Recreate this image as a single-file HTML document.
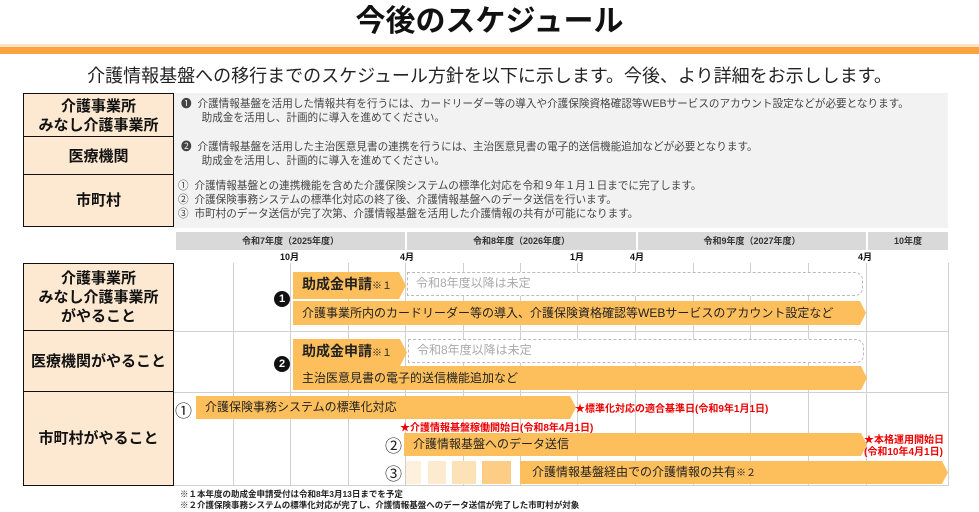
<!DOCTYPE html>
<html><head><meta charset="utf-8">
<style>
*{margin:0;padding:0;box-sizing:border-box}
body{width:979px;height:512px;background:#fff;position:relative;overflow:hidden;font-family:"Liberation Sans","Noto Sans CJK JP",sans-serif;color:#222}
.a{position:absolute;white-space:nowrap}
.lab{position:absolute;background:#fde9d1;border:1.5px solid #111;display:flex;align-items:center;justify-content:center;text-align:center;font-weight:bold;font-size:15px;line-height:19px;color:#111}
.hd{position:absolute;top:232px;height:18px;background:#d9d9d9;font-size:9px;font-weight:bold;text-align:center;line-height:18px;color:#333}
.mo{position:absolute;top:250px;font-size:9px;font-weight:bold;color:#111}
.vl{position:absolute;width:1px;background:#d0d0d0}
.hl{position:absolute;height:1px;background:#d0d0d0}
.bar{position:absolute;background:#fdbf5c;font-size:12px;line-height:24px;padding-left:9px;color:#222;clip-path:polygon(0 0,calc(100% - 6px) 0,100% 50%,calc(100% - 6px) 100%,0 100%)}
.sub{position:absolute;background:#fdbf5c;font-size:14px;font-weight:bold;line-height:24px;padding-left:9px;clip-path:polygon(0 0,calc(100% - 7px) 0,100% 50%,calc(100% - 7px) 100%,0 100%)}
.dash{position:absolute;border:1.5px dashed #bbb;border-radius:0 8px 8px 0;font-size:12px;color:#aaa;line-height:21px;padding-left:8px;background:#fff}
.red{position:absolute;color:#e00;font-size:10px;font-weight:bold;white-space:nowrap}
.circ{position:absolute;font-size:17px;color:#222}
.bn{position:absolute;width:16px;height:16px;border-radius:50%;background:#111;color:#fff;font-size:11px;font-weight:bold;text-align:center;line-height:16px}
.t{font-size:10.6px;line-height:14px;color:#444}
</style></head><body>
<div class="a" style="left:0;width:979px;top:4px;text-align:center;font-size:30px;font-weight:bold;color:#111;line-height:36px">今後のスケジュール</div>
<div class="a" style="left:0;top:44px;width:979px;height:3px;background:#fde3c6"></div>
<div class="a" style="left:0;top:47px;width:979px;height:7px;background:#fba33d"></div>
<div class="a" style="left:0;width:979px;top:62px;text-align:center;font-size:18px;color:#222">介護情報基盤への移行までのスケジュール方針を以下に示します。今後、より詳細をお示しします。</div>

<div class="a" style="left:173px;top:93px;width:775px;height:135px;background:#f2f2f2"></div>
<div class="lab" style="left:23px;top:93px;width:151px;height:45px">介護事業所<br>みなし介護事業所</div>
<div class="lab" style="left:23px;top:136px;width:151px;height:40px">医療機関</div>
<div class="lab" style="left:23px;top:174px;width:151px;height:53px">市町村</div>
<div class="a t" style="left:181px;top:97px">❶&nbsp; 介護情報基盤を活用した情報共有を行うには、カードリーダー等の導入や介護保険資格確認等WEBサービスのアカウント設定などが必要となります。<br>&nbsp;&nbsp;&nbsp;&nbsp;&nbsp;&nbsp; 助成金を活用し、計画的に導入を進めてください。</div>
<div class="a t" style="left:181px;top:140px">❷&nbsp; 介護情報基盤を活用した主治医意見書の連携を行うには、主治医意見書の電子的送信機能追加などが必要となります。<br>&nbsp;&nbsp;&nbsp;&nbsp;&nbsp;&nbsp; 助成金を活用し、計画的に導入を進めてください。</div>
<div class="a t" style="left:178px;top:179px">①&nbsp; 介護情報基盤との連携機能を含めた介護保険システムの標準化対応を令和９年１月１日までに完了します。<br>②&nbsp; 介護保険事務システムの標準化対応の終了後、介護情報基盤へのデータ送信を行います。<br>③&nbsp; 市町村のデータ送信が完了次第、介護情報基盤を活用した介護情報の共有が可能になります。</div>

<div class="hd" style="left:176px;width:229px">令和7年度（2025年度）</div>
<div class="hd" style="left:407px;width:229px">令和8年度（2026年度）</div>
<div class="hd" style="left:638px;width:228px">令和9年度（2027年度）</div>
<div class="hd" style="left:868px;width:80px">10年度</div>
<div class="mo" style="left:280px">10月</div>
<div class="mo" style="left:400px">4月</div>
<div class="mo" style="left:570px">1月</div>
<div class="mo" style="left:630px">4月</div>
<div class="mo" style="left:858px">4月</div>

<div class="vl" style="left:233px;top:263px;height:222px"></div>
<div class="vl" style="left:290px;top:263px;height:222px"></div>
<div class="vl" style="left:348px;top:263px;height:222px"></div>
<div class="vl" style="left:405px;top:263px;height:222px"></div>
<div class="vl" style="left:463px;top:263px;height:222px"></div>
<div class="vl" style="left:520px;top:263px;height:222px"></div>
<div class="vl" style="left:577px;top:263px;height:222px"></div>
<div class="vl" style="left:635px;top:263px;height:222px"></div>
<div class="vl" style="left:693px;top:263px;height:222px"></div>
<div class="vl" style="left:750px;top:263px;height:222px"></div>
<div class="vl" style="left:808px;top:263px;height:222px"></div>
<div class="vl" style="left:866px;top:263px;height:222px"></div>
<div class="vl" style="left:948px;top:263px;height:222px"></div>
<div class="hl" style="left:174px;top:331px;width:775px"></div>
<div class="hl" style="left:174px;top:392px;width:775px"></div>
<div class="hl" style="left:174px;top:485px;width:775px"></div>

<div class="lab" style="left:23px;top:263px;width:151px;height:69px">介護事業所<br>みなし介護事業所<br>がやること</div>
<div class="lab" style="left:23px;top:330px;width:151px;height:63px">医療機関がやること</div>
<div class="lab" style="left:23px;top:391px;width:151px;height:95px">市町村がやること</div>

<div class="bn" style="left:274px;top:291px">1</div>
<div class="sub" style="left:293px;top:272px;width:113px">助成金申請<span style="font-size:10px;font-weight:normal">※１</span></div>
<div class="dash" style="left:407px;top:272px;width:456px;height:24px">令和8年度以降は未定</div>
<div class="bar" style="left:293px;top:301px;width:573px">介護事業所内のカードリーダー等の導入、介護保険資格確認等WEBサービスのアカウント設定など</div>

<div class="bn" style="left:274px;top:356px">2</div>
<div class="sub" style="left:293px;top:339px;width:114px">助成金申請<span style="font-size:10px;font-weight:normal">※１</span></div>
<div class="dash" style="left:408px;top:339px;width:456px;height:24px">令和8年度以降は未定</div>
<div class="bar" style="left:293px;top:366px;width:574px">主治医意見書の電子的送信機能追加など</div>

<div class="circ" style="left:175px;top:397px">①</div>
<div class="bar" style="left:196px;top:396px;width:380px;height:23px;line-height:23px">介護保険事務システムの標準化対応</div>
<div class="red" style="left:575px;top:400px">★標準化対応の適合基準日(令和9年1月1日)</div>
<div class="red" style="left:400px;top:419px">★介護情報基盤稼働開始日(令和8年4月1日)</div>
<div class="circ" style="left:385px;top:432px">②</div>
<div class="bar" style="left:404px;top:433px;width:463px;height:23px;line-height:23px">介護情報基盤へのデータ送信</div>
<div class="red" style="left:864px;top:435px;line-height:12px">★本格運用開始日<br>(令和10年4月1日)</div>
<div class="circ" style="left:385px;top:460px">③</div>
<div class="a" style="left:406px;top:461px;width:15px;height:23px;background:#fdf0dc"></div>
<div class="a" style="left:428px;top:461px;width:18px;height:23px;background:#fdebcf"></div>
<div class="a" style="left:452px;top:461px;width:24px;height:23px;background:#fde2b8"></div>
<div class="a" style="left:482px;top:461px;width:29px;height:23px;background:#fdcd86"></div>
<div class="bar" style="left:520px;top:461px;width:428px;height:23px;line-height:23px;padding-left:12px">介護情報基盤経由での介護情報の共有<span style="font-size:10px">※２</span></div>

<div class="a" style="left:180px;top:489px;font-size:8.5px;font-weight:bold;color:#222;line-height:11px">※１本年度の助成金申請受付は令和8年3月13日までを予定<br>※２介護保険事務システムの標準化対応が完了し、介護情報基盤へのデータ送信が完了した市町村が対象</div>
</body></html>
